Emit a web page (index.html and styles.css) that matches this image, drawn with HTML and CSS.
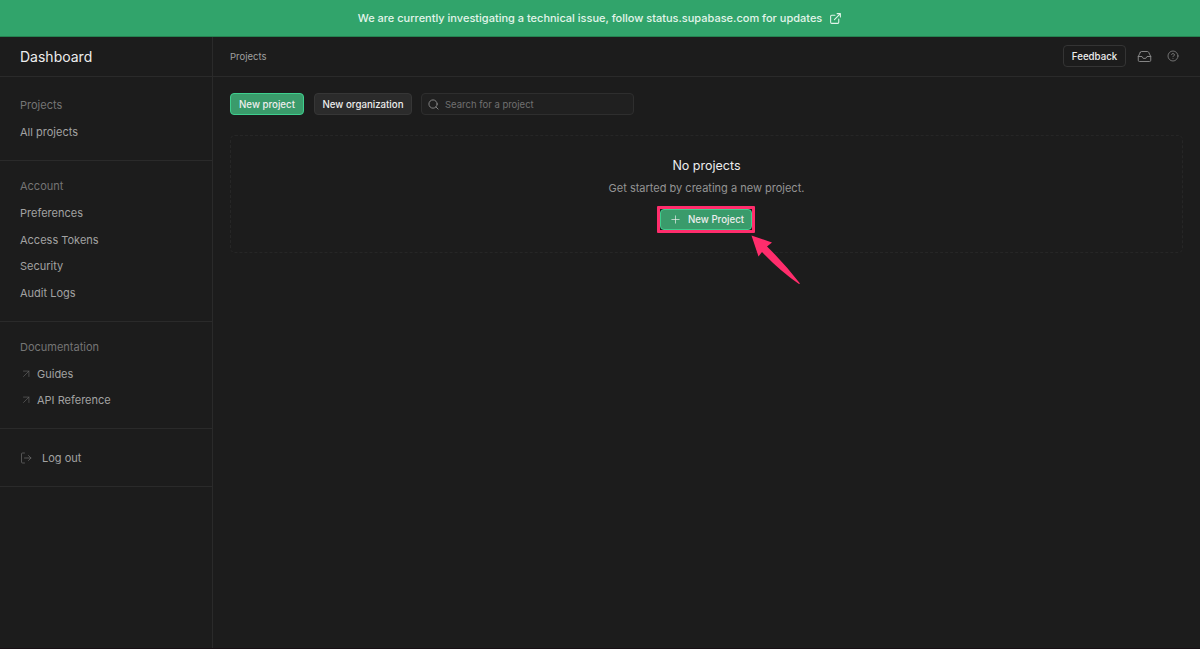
FILE: index.html
```html
<!DOCTYPE html>
<html lang="en">
<head>
  <meta charset="UTF-8">
  <title>Dashboard</title>
  <link rel="stylesheet" href="styles.css">
</head>
<body>
  <a class="banner" href="#">
    <span>We are currently investigating a technical issue, follow status.supabase.com for updates</span>
    <svg class="banner-icon" viewBox="0 0 24 24"><path d="M18 13v6a2 2 0 0 1-2 2H5a2 2 0 0 1-2-2V8a2 2 0 0 1 2-2h6M15 3h6v6M10 14L21 3"/></svg>
  </a>

  <div class="layout">
    <aside class="sidebar">
      <h1>Dashboard</h1>
      <nav class="group first">
        <h2>Projects</h2>
        <a href="#">All projects</a>
      </nav>
      <nav class="group">
        <h2>Account</h2>
        <a href="#">Preferences</a>
        <a href="#">Access Tokens</a>
        <a href="#">Security</a>
        <a href="#">Audit Logs</a>
      </nav>
      <nav class="group">
        <h2>Documentation</h2>
        <a href="#"><svg class="arrow-icon" viewBox="0 0 24 24"><path d="M6 18L19 5M6 5h13v13"/></svg><span>Guides</span></a>
        <a href="#"><svg class="arrow-icon" viewBox="0 0 24 24"><path d="M6 18L19 5M6 5h13v13"/></svg><span>API Reference</span></a>
      </nav>
      <nav class="group last">
        <a href="#"><svg class="logout-icon" viewBox="0 0 24 24"><path d="M9 2H5a2 2 0 0 0-2 2v16a2 2 0 0 0 2 2h4M17 17l5-5-5-5M22 12H9"/></svg><span>Log out</span></a>
      </nav>
    </aside>

    <main class="main">
      <header class="topbar">
        <span class="crumb">Projects</span>
        <div class="actions">
          <button class="btn btn-outline">Feedback</button>
          <svg class="inbox-icon" viewBox="0 0 24 24"><path d="M22 12h-6l-2 3h-4l-2-3H2M5.45 5.11L2 12v6a2 2 0 0 0 2 2h16a2 2 0 0 0 2-2v-6l-3.45-6.89A2 2 0 0 0 16.76 4H7.24a2 2 0 0 0-1.79 1.11z"/></svg>
          <svg class="help-icon" viewBox="0 0 24 24"><circle cx="12" cy="12" r="10"/><path d="M9.09 9a3 3 0 0 1 5.83 1c0 2-3 3-3 3M12 17h.01"/></svg>
        </div>
      </header>

      <div class="content">
        <div class="toolbar">
          <button class="btn btn-primary">New project</button>
          <button class="btn btn-default">New organization</button>
          <label class="search">
            <svg class="search-icon" viewBox="0 0 24 24"><circle cx="11" cy="11" r="9"/><path d="M22 22l-4.5-4.5"/></svg>
            <input type="text" placeholder="Search for a project">
          </label>
        </div>

        <section class="empty">
          <h3>No projects</h3>
          <p>Get started by creating a new project.</p>
          <div class="highlight">
            <button class="btn btn-primary btn-create">
              <svg class="plus-icon" viewBox="0 0 24 24"><path d="M12 4v16M4 12h16"/></svg>
              <span>New Project</span>
            </button>
            <svg class="pointer" viewBox="0 0 50 50"><path d="M0.5 0.5L21 7.5L16 11.5Q34 29 49 48.5L48 49Q29 36 11 17L7.5 21.5Z"/></svg>
          </div>
        </section>
      </div>
    </main>
  </div>
</body>
</html>
```

FILE: styles.css
```css
* { box-sizing: border-box; }
body { margin: 0; height: 649px; overflow: hidden; display: flex; flex-direction: column; background: #1c1c1c; color: #ededed; font-family: Inter, sans-serif; font-size: 11px; }
h1, h2, h3, p { margin: 0; font-weight: 400; }
a { color: inherit; text-decoration: none; }
svg { fill: none; stroke: currentColor; stroke-width: 1.5; stroke-linecap: round; stroke-linejoin: round; flex: none; }

.banner { height: 37px; flex: none; display: flex; align-items: center; justify-content: center; gap: 7px; background: #31a46b; border-bottom: 1px solid #258250; color: #e2f4ea; font-size: 11px; font-weight: 500; }
.banner-icon { width: 13px; height: 13px; stroke-width: 2; }

.layout { flex: 1; display: flex; border-bottom: 1px solid #181015; }
.sidebar { width: 213px; flex: none; border-right: 1px solid #2a2a2a; }
.sidebar h1 { height: 40px; padding-left: 20px; line-height: 39px; font-size: 14px; color: #ededed; border-bottom: 1px solid #2a2a2a; }
.group { padding: 11.6px 20px 14.6px; border-bottom: 1px solid #2a2a2a; }
.group.first { padding: 15px 20px; }
.group.last { padding: 15px 20px 14.6px; }
.group h2, .group a { height: 26.7px; display: flex; align-items: center; font-size: 11px; }
.group h2 { color: #757575; }
.group a { color: #a2a2a2; }
.arrow-icon { width: 10px; height: 10px; margin: 0 6px 0 1px; color: #686868; }
.logout-icon { width: 12px; height: 12px; margin-right: 10px; color: #686868; }

.main { flex: 1; min-width: 0; }
.topbar { height: 40px; padding: 0 21px 1px 17px; display: flex; align-items: center; justify-content: space-between; border-bottom: 1px solid #2a2a2a; }
.crumb { font-size: 9.5px; color: #a0a0a0; }
.actions { display: flex; align-items: center; color: #8c8c8c; }
.inbox-icon { width: 15px; height: 15px; margin: 0 15px 0 11px; }
.help-icon { width: 12px; height: 12px; }

.btn { height: 22px; padding: 0; display: flex; align-items: center; justify-content: center; border: 1px solid #3e3e3e; border-radius: 4px; color: #ededed; font: 500 9.7px Inter, sans-serif; }
.btn-outline { width: 63px; background: #1c1c1c; border-color: #343434; }
.btn-primary { width: 74px; background: #3a9b6b; border-color: #3ecf8e; }
.btn-default { width: 98px; background: #2b2b2b; border-color: #363636; }

.content { padding: 16px 17px; }
.toolbar { display: flex; gap: 10px; }
.search { width: 213px; height: 22px; margin-left: -1px; padding: 0 6px; display: flex; align-items: center; gap: 6px; background: #202020; border: 1px solid #2e2e2e; border-radius: 4px; color: #8c8c8c; }
.search-icon { width: 11px; height: 11px; stroke-width: 2; }
.search input { width: 170px; padding: 0; border: 0; outline: 0; background: none; color: #ededed; font: 9.5px Inter, sans-serif; }
.search input::placeholder { color: #707070; }

.empty { height: 118px; margin-top: 20px; padding-top: 20px; display: flex; flex-direction: column; align-items: center; border: 1px dashed #262626; border-radius: 5px; }
.empty h3 { font-size: 12.5px; line-height: 20px; }
.empty p { margin-top: 2px; font-size: 11px; line-height: 20px; color: #949494; }

.highlight { position: relative; left: -1px; margin-top: 8px; border: 3px solid #ff2d6c; border-radius: 1px; background: #1c1c1c; }
.btn-create { width: 92px; height: 21px; padding-left: 3px; gap: 7px; }
.plus-icon { width: 11px; height: 11px; }
.pointer { position: absolute; left: 91px; top: 26px; width: 50px; height: 50px; fill: #ff2d6c; stroke: none; }
```
